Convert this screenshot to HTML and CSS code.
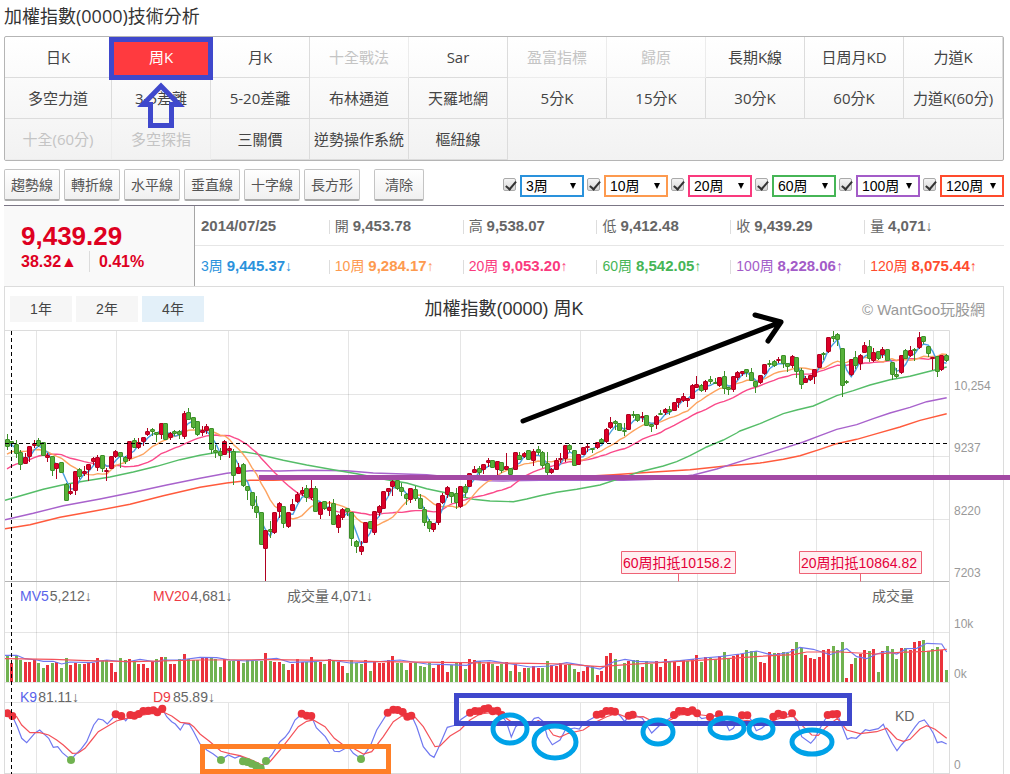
FILE: index.html
```html
<!DOCTYPE html>
<html lang="zh-Hant">
<head>
<meta charset="utf-8">
<title>加權指數(0000)技術分析</title>
<link rel="stylesheet" href="styles.css">
</head>
<body>
<main class="page">
  <h1 class="title">加權指數(0000)技術分析</h1>

  <nav class="tabs">
    <a href="#">日K</a><a href="#" class="active">周K</a><a href="#">月K</a><a href="#" class="off">十全戰法</a><a href="#">Sar</a><a href="#" class="off">盈富指標</a><a href="#" class="off">歸原</a><a href="#">長期K線</a><a href="#">日周月KD</a><a href="#">力道K</a>
    <a href="#">多空力道</a><a href="#">3-5差離</a><a href="#">5-20差離</a><a href="#">布林通道</a><a href="#">天羅地網</a><a href="#">5分K</a><a href="#">15分K</a><a href="#">30分K</a><a href="#">60分K</a><a href="#">力道K(60分)</a>
    <a href="#" class="off">十全(60分)</a><a href="#" class="off">多空探指</a><a href="#">三關價</a><a href="#">逆勢操作系統</a><a href="#">樞紐線</a>
  </nav>

  <div class="tools">
    <div class="draw">
      <button type="button">趨勢線</button><button type="button">轉折線</button><button type="button">水平線</button><button type="button">垂直線</button><button type="button">十字線</button><button type="button">長方形</button><button type="button" class="clear">清除</button>
    </div>
    <div class="averages">
      <span class="avg c3"><input type="checkbox" checked aria-label="顯示3周"><span class="pick"><select aria-label="均線一"><option>3周</option></select></span></span>
      <span class="avg c10"><input type="checkbox" checked aria-label="顯示10周"><span class="pick"><select aria-label="均線二"><option>10周</option></select></span></span>
      <span class="avg c20"><input type="checkbox" checked aria-label="顯示20周"><span class="pick"><select aria-label="均線三"><option>20周</option></select></span></span>
      <span class="avg c60"><input type="checkbox" checked aria-label="顯示60周"><span class="pick"><select aria-label="均線四"><option>60周</option></select></span></span>
      <span class="avg c100"><input type="checkbox" checked aria-label="顯示100周"><span class="pick"><select aria-label="均線五"><option>100周</option></select></span></span>
      <span class="avg c120"><input type="checkbox" checked aria-label="顯示120周"><span class="pick"><select aria-label="均線六"><option>120周</option></select></span></span>
    </div>
  </div>

  <section class="quote">
    <div class="price">
      <strong class="last">9,439.29</strong>
      <div class="change"><span>38.32▲</span><span class="pct">0.41%</span></div>
    </div>
    <div class="stats">
      <div><b>2014/07/25</b></div>
      <div>開 <b>9,453.78</b></div>
      <div>高 <b>9,538.07</b></div>
      <div>低 <b>9,412.48</b></div>
      <div>收 <b>9,439.29</b></div>
      <div>量 <b>4,071</b>↓</div>
      <div class="c3">3周 <b>9,445.37</b>↓</div>
      <div class="c10">10周 <b>9,284.17</b>↑</div>
      <div class="c20">20周 <b>9,053.20</b>↑</div>
      <div class="c60">60周 <b>8,542.05</b>↑</div>
      <div class="c100">100周 <b>8,228.06</b>↑</div>
      <div class="c120">120周 <b>8,075.44</b>↑</div>
    </div>
  </section>

  <section class="chart">
    <header class="charthead">
      <div class="ranges">
        <button type="button">1年</button><button type="button">2年</button><button type="button" class="on">4年</button>
      </div>
      <h2>加權指數(0000) 周K</h2>
      <span class="copy">© WantGoo玩股網</span>
    </header>
    <svg id="plot" class="plot" viewBox="5 329 998 445">
      <g id="grid"></g>
      <g id="averages"></g>
      <g id="candles"></g>
      <g id="volume"></g>
      <g id="oscillator"></g>
      <path class="cross" d="M11.5 331V774M5 443.5H948"/>
      <g class="axis">
        <text x="954" y="390">10,254</text><text x="954" y="452">9237</text><text x="954" y="515">8220</text><text x="954" y="577">7203</text>
        <text x="954" y="628">10k</text><text x="954" y="678">0k</text><text x="954" y="769">0</text>
      </g>
      <g class="legend">
        <text x="20" y="601"><tspan class="blue">MV5</tspan><tspan dx="1">5,212↓</tspan></text>
        <text x="153" y="601"><tspan class="red">MV20</tspan><tspan dx="1">4,681↓</tspan></text>
        <text x="287" y="601">成交量<tspan dx="2">4,071↓</tspan></text>
        <text x="872" y="601">成交量</text>
        <text x="20" y="702"><tspan class="blue">K9</tspan><tspan dx="1">81.11↓</tspan></text>
        <text x="153" y="702"><tspan class="red">D9</tspan><tspan dx="2">85.89↓</tspan></text>
        <text x="895" y="721">KD</text>
      </g>
      <g class="flag">
        <path d="M621.5 551.5h114v22h-114zM678.5 573.5v8M799.5 551.5h122v22h-122zM860.5 573.5v8"/>
        <text x="623" y="568">60周扣抵10158.2</text><text x="801" y="568">20周扣抵10864.82</text>
      </g>
    </svg>
  </section>

  <svg class="notes" viewBox="0 0 1010 774" aria-hidden="true">
    <path stroke="#a349a4" stroke-width="5" d="M259 477.5H1010"/>
    <path stroke="#000" stroke-width="5" stroke-linecap="round" stroke-linejoin="round" d="M523 421L781 322M755 315L781 322L768 341"/>
    <g stroke="#3f48cc" stroke-width="5">
      <path d="M111.5 39.5h99v38h-99zM456.500 695.500h393v28h-393z"/>
      <path d="M161 86L143 104.500H150.500V125.500H171.500V104.500H179Z"/>
    </g>
    <path stroke="#ff7f27" stroke-width="5" d="M202.500 746.500h186v25h-186z"/>
    <g stroke="#00a2e8" stroke-width="5">
      <ellipse cx="510" cy="729" rx="17" ry="14"/><ellipse cx="555" cy="742" rx="21" ry="16"/><ellipse cx="658" cy="732" rx="15" ry="12"/>
      <ellipse cx="727" cy="728" rx="17" ry="10"/><ellipse cx="761" cy="729" rx="12" ry="9"/><ellipse cx="812" cy="742" rx="20" ry="12"/>
    </g>
  </svg>
</main>
<script src="chart.js"></script>
</body>
</html>
```

FILE: styles.css
```css
* { box-sizing: border-box; }
body {
  margin: 0;
  background: #fff;
  color: #444;
  font-family: "Liberation Sans", "Noto Sans CJK TC", sans-serif;
}
.page { position: relative; padding: 4px 6px 0 4px; }

.title {
  margin: 0 0 8px;
  font: 400 18px/24px "Open Sans", "Noto Sans CJK TC", sans-serif;
  color: #333;
}

.tabs {
  display: grid;
  grid-template-columns: 107px repeat(9, 1fr);
  grid-auto-rows: 41px;
  border: 1px solid #b5b5b5;
  border-radius: 2px;
  background: linear-gradient(#fff, #f2f2f2);
  font: 400 15px/40px "Open Sans", "Noto Sans CJK TC", sans-serif;
  text-align: center;
}
.tabs a {
  border-right: 1px solid #dcdcdc;
  border-bottom: 1px solid #dcdcdc;
  color: #444;
  text-decoration: none;
  white-space: nowrap;
}
.tabs .off { color: #c4c4c4; border-color: #ececec; }
.tabs .active { background: #ff3a3f; color: #fff; }

.tools {
  display: flex;
  justify-content: space-between;
  align-items: center;
  padding: 8px 0 4px;
}
.draw { display: flex; gap: 4px; }
.draw button {
  height: 32px;
  padding: 0 6px;
  border: 1px solid #c4c4c4;
  border-bottom: 2px solid #aaa;
  border-radius: 2px;
  background: linear-gradient(#fff, #f0f0f0);
  color: #555;
  font: 400 14px/28px "Liberation Sans", "Noto Sans CJK TC", sans-serif;
}
.draw .clear { margin-left: 10px; padding: 0 10px; }

.averages { display: flex; gap: 3px; }
.avg { display: flex; align-items: center; gap: 4px; }
.avg input {
  position: relative;
  width: 13px;
  height: 13px;
  margin: 0 0 2px;
  appearance: none;
  border: 1px solid #aaa;
  border-radius: 2px;
  background: linear-gradient(#f4f4f4, #d8d8d8);
}
.avg input:checked::after {
  content: "";
  position: absolute;
  left: 4px;
  top: 0;
  width: 4px;
  height: 9px;
  border: solid #333;
  border-width: 0 2px 2px 0;
  transform: rotate(40deg);
}
.pick { position: relative; margin-top: 2px; }
.pick::after {
  content: "";
  position: absolute;
  right: 8px;
  top: 8px;
  border: solid transparent;
  border-width: 6px 3px 0;
  border-top-color: #000;
}
.pick select {
  display: block;
  width: 64px;
  height: 22px;
  padding: 0 4px;
  appearance: none;
  border: 2px solid currentColor;
  border-radius: 0;
  background: #fff;
  font: 400 14px/18px "Liberation Sans", "Noto Sans CJK TC", sans-serif;
  color: inherit;
  -webkit-text-fill-color: #000;
}
.pick select option { color: #000; }

.c3 { color: #2a92dc; }
.c10 { color: #fd9a4f; }
.c20 { color: #fa3a7e; }
.c60 { color: #46b556; }
.c100 { color: #a35cc8; }
.c120 { color: #ff4b2d; }

.quote {
  display: grid;
  grid-template-columns: 191px 1fr;
  border-top: 1px solid #7b7685;
}
.price {
  padding: 16px 17px 14px;
  border-right: 1px solid #a6a6a6;
  background: #f9f9f9;
  color: #de001f;
  font-weight: 700;
}
.last { display: block; font-size: 26px; line-height: 29px; }
.change { display: flex; gap: 12px; font-size: 16px; line-height: 21px; }
.pct { padding-left: 9px; border-left: 1px solid #dcdcdc; }
.stats {
  display: grid;
  grid-template-columns: repeat(6, 1fr);
  padding-right: 6px;
  font-size: 14px;
  line-height: 16px;
  color: #666;
}
.stats div {
  padding: 12px 0 12px 6px;
  height: 40px;
  white-space: nowrap;
  background: linear-gradient(#ddd, #ddd) 0 14px / 1px 14px no-repeat;
}
.stats div:nth-child(6n + 1) { background: none; }
.stats div:nth-child(-n + 6) { border-bottom: 1px solid #e6e6e6; }
.stats div:nth-child(6) { margin-right: -6px; }
.stats b { font-size: 15px; }

.chart { border: 1px solid #dcdcdc; border-bottom: 0; }
.charthead {
  display: grid;
  grid-template-columns: 1fr auto 1fr;
  align-items: center;
  height: 42px;
  padding: 1px 5px 0;
}
.ranges { display: flex; gap: 4px; }
.ranges button {
  width: 62px;
  height: 26px;
  padding: 0;
  border: 0;
  background: #f6f6f6;
  color: #444;
  font: 400 14px/26px "Liberation Sans", "Noto Sans CJK TC", sans-serif;
}
.ranges .on { background: #e3f0f9; }
.charthead h2 { margin: 0; font-size: 18px; line-height: 26px; font-weight: 400; color: #333; }
.copy { justify-self: end; margin-right: 13px; padding-top: 3px; font-size: 15px; line-height: 24px; color: #999; }

.plot { display: block; width: 100%; fill: none; }
.plot text { font-size: 14px; }
.plot .axis text { font-size: 12px; fill: #999; }
.legend text { fill: #666; }
.legend .blue { fill: #5a64ea; }
.legend .red { fill: #ee3a44; }
.flag path { fill: #ffeff1; stroke: #ee6275; }
.flag text { fill: #e4003a; }
.cross { stroke: #000; stroke-dasharray: 4 3; }
.ma { stroke-width: 1.4; }
.grid { stroke: #000; stroke-opacity: .1; }
.frame { stroke: #dcdcdc; }
.base { stroke: #b4b4b4; }
.up { fill: #dc0028; stroke: #b00020; }
.down { fill: #57b13a; stroke: #3c8f28; }
.vol-up, .dot-up { fill: #eb323c; }
.vol-down, .dot-down { fill: #70b250; }
.k { stroke: #7078f0; stroke-width: 1.2; }
.d { stroke: #f4525a; stroke-width: 1.2; }

.notes {
  position: absolute;
  left: 0;
  top: 0;
  width: 100%;
  fill: none;
  pointer-events: none;
}
```

FILE: chart.js
```js
const NS = 'http://www.w3.org/2000/svg';
const byId = id => document.getElementById(id);

function add(parent, name, attrs) {
  const el = document.createElementNS(NS, name);
  for (const key in attrs) el.setAttribute(key, attrs[key]);
  parent.appendChild(el);
}

// Series values use three units per drawing unit; each panel has its own origin.
const UNIT = 3;
const PRICE_TOP = 325;
const LOWER_TOP = 580;
const FIRST_X = 7;
const LAST_X = 946.5;
const r = v => Math.round(v * 10) / 10;

function line(parent, points, top, cls, color) {
  const d = points.map(p => r(p[0] / UNIT) + ',' + r(top + p[1] / UNIT)).join(' ');
  const attrs = { points: d, class: cls };
  if (color) attrs.stroke = color;
  add(parent, 'polyline', attrs);
}

// Turns "offset: x,y x,y | offset: ..." into absolute points.
function parse(text) {
  return text.split('|').flatMap(part => {
    const [head, body] = part.split(':');
    const [dx, dy] = head.trim().split('/').map(Number);
    return body.trim().split(/\s+/).map(pair => {
      const [x, y] = pair.split(',').map(Number);
      return [x + dx, y + (dy || 0)];
    });
  });
}

// Direction, body top, body bottom, high, low.
const candles = `G346,365,328,374 G352,358,350,362 G360,388,345,398 G385,421,376,434 R400,418,384,418 R367,397,367,412
R358,364,346,369 G348,362,339,366 G355,394,355,394 R394,400,384,410 G397,439,397,452 R418,433,415,461 G415,445,415,445
G481,529,475,529 R502,508,478,510 R442,499,442,510 G436,455,430,462 R442,448,423,454 R421,436,417,468 R403,412,396,420
R400,430,391,438 G394,433,394,440 R438,440,430,468 R397,433,397,433 R382,397,376,400 G385,397,385,428 G400,412,392,417
R352,403,352,408 G349,370,340,370 R355,370,340,372 R340,352,337,364 R322,331,310,334 G316,320,310,332 G325,331,322,350
R298,331,298,341 G298,346,294,346 R328,340,322,344 G322,328,316,334 G322,331,315,342 R268,337,259,342 G265,286,250,286
G280,310,276,313 G292,331,290,334 R319,325,303,333 R307,319,298,328 G313,376,310,388 G379,384,360,398 G382,394,370,404
R352,391,346,391 R373,377,363,398 G382,454,373,480 R430,448,415,448 G421,482,415,485 G487,498,487,525 G505,542,500,552
G547,565,513,578 G565,661,565,661 R619,673,614,768 G616,622,588,638 R565,625,565,628 R538,562,531,578 G547,598,547,609
R565,605,562,608 R541,559,522,559 R511,532,502,534 R499,506,487,513 G493,520,481,530 R493,518,462,524 G493,562,484,562
R535,571,530,582 G532,551,528,554 R550,559,528,574 G538,601,523,601 R574,610,566,624 R556,580,550,585 G553,560,550,574
G565,643,565,662 G652,667,646,684 R667,682,648,690 R595,655,595,655 G592,611,592,611 R562,625,558,630 R547,565,540,574
R502,553,502,553 R493,502,488,514 R472,485,464,514 G469,493,466,496 G490,502,475,513 G511,523,505,540 R493,526,488,534
G496,523,484,528 G523,553,507,553 G556,595,546,603 G592,613,582,621 R598,616,594,621 R538,595,538,600 R514,535,503,538
R490,511,484,518 G505,517,505,534 G508,535,489,552 R487,547,484,549 G487,505,477,516 R447,487,447,487 R436,445,423,445
G433,443,424,452 R421,436,416,446 R409,415,399,426 G409,430,406,430 R412,436,412,450 G415,439,410,445 R427,434,384,434
G433,450,433,450 R385,436,385,436 G394,406,382,406 R388,397,382,400 G379,406,376,406 R382,409,372,422 G376,384,363,390
G385,424,378,430 G418,445,382,452 R436,445,430,448 R409,436,399,436 R403,406,384,415 R364,403,364,410 G364,376,357,382
G379,424,379,424 R391,421,391,421 R370,391,366,391 R366,368,358,380 G373,376,370,384 R355,370,352,372 G346,353,340,356
R316,352,310,354 R295,310,276,312 G292,298,286,314 G298,319,294,319 G319,322,295,333 R271,316,268,316 G270,272,258,280
G271,289,266,292 R276,280,262,290 G274,304,272,304 G301,305,298,320 R277,301,270,312 G268,271,256,271 R256,265,250,270
G256,262,243,270 R235,259,230,259 R223,235,222,248 R217,228,205,230 R223,229,220,245 R184,223,176,223 R181,190,153,190
G184,199,178,202 R172,196,165,200 G166,172,153,176 G174,176,160,178 R160,182,156,186 G157,193,138,206 G190,196,186,209
R157,196,157,201 R145,160,138,165 R142,146,137,154 G136,145,132,155 G145,169,130,169 G172,186,172,203 R154,175,149,178
R121,148,120,150 G117,119,105,126 G112,124,105,126 R106,109,97,114 G94,118,93,128 G118,126,114,141 R97,124,90,130
G100,142,97,160 G139,181,129,191 R163,173,153,175 R154,166,151,167 R136,155,132,177 R91,130,88,130 G88,91,81,106
R40,82,37,84 G37,43,18,51 G31,46,25,62 G73,184,73,215 G172,175,165,177 R106,151,105,153 G100,124,78,132 R94,118,87,136
R64,85,51,85 G67,103,46,112 R85,109,70,111 G82,103,77,105 R76,91,66,99 G76,109,73,109 G115,150,110,166 G151,157,129,160
R94,145,90,147 G79,103,73,103 R79,94,63,96 G75,79,70,108 R40,70,21,72 G37,52,34,57 G67,88,65,97 R100,103,95,134
G97,142,96,156 R94,136,92,137 G94,109,87,110`.split(/\s+/).map(s => ({ up: s[0] === 'R', v: s.slice(1).split(',').map(Number) }));

const volume = `G226 R248 G228 G240 R246 R246 R240 G249 G264 R255 G248 R246 G264 G234 R255 R248 G252 R252 R246 R248 R234 G242
G240 R250 R276 G234 G240 R237 G243 R252 R252 R264 R244 G238 R231 G231 R252 R252 G237 R222 G237 G240 G240 R234 R234 G234
G237 G261 R237 G243 G243 R243 G249 G240 G243 G243 G243 R219 G243 R246 R246 G252 R270 R252 R237 R246 G246 R231 G243 R246
G252 R237 G243 R246 R258 G279 G240 G248 G252 R240 G273 R243 R249 R249 R240 R228 G249 G249 G270 R249 G249 G258 G261 G250
R264 R255 R243 R276 G255 G249 R249 G267 R237 R240 G243 R252 R246 G252 R258 G252 R246 G273 R252 G276 R264 G264 R258 R264
G264 G243 R255 R258 R249 R255 G252 G267 R276 R273 R260 G257 R285 R273 R228 R219 G237 G267 G249 R243 G240 G240 R261 G243
G252 R243 R261 R237 G246 R246 R258 R240 G243 R237 R225 G246 R231 G234 G238 R228 G216 G237 R228 R222 R222 G210 G213 G214
R246 R249 R216 G219 R219 G216 G219 R207 G186 G204 R225 R234 R237 R231 R210 R207 G198 G210 G186 R294 R252 G234 R222 R210
G213 R207 G276 R213 G198 G207 G237 R204 G204 R210 R186 R183 G180 G213 G207 G201 R210 G270`.split(/\s+/);

const grid = byId('grid');
const columns = [36.5, 116.5, 228.5, 348.5, 460.5, 580.5, 697.5, 816.5, 933.5];
add(grid, 'path', {
  class: 'grid',
  d: columns.map(x => `M${x} 331V682M${x} 703V774`).join('') + 'M5 394.5H949M5 456.5H949M5 519.5H949M5 632.5H949M5 682.5H949M5 702.5H949'
});
add(grid, 'path', { class: 'frame', d: 'M5 330.5H949.5V774M5 773.5H949' });
add(grid, 'path', { class: 'base', d: 'M5 581.5H949' });

const averages = byId('averages');
const step = (LAST_X - FIRST_X) / (candles.length - 1);
const earlier = Array.from({ length: 20 }, (_, i) => 525 - i * 9);
const closes = earlier.concat(candles.map(c => c.up ? c.v[0] : c.v[1]));
function movingAverage(n) {
  return candles.map((c, i) => {
    const end = i + earlier.length + 1;
    const sum = closes.slice(end - n, end).reduce((a, b) => a + b, 0);
    return [(FIRST_X + i * step) * UNIT, sum / n];
  });
}
line(averages, parse(`0/0: 15,611 90,599 180,577 280,559 390,538 490,512 600,487 680,474 750,466 820,466 920,463 1100,458
| 1470/0: 250,456 370,449 480,442 600,434 700,424 780,417
| 2220/-45: 60,459 130,448 180,437 240,418 290,401 350,388 410,371 480,351 540,331 620,311`), PRICE_TOP, 'ma', '#ff5a3c');
line(averages, parse(`0/0: 15,584 100,565 190,542 300,522 400,502 500,480 600,460 680,445 750,437
| 720/0: 120,438 200,436 320,437 400,444 560,449 690,462 | 1470/0: 0,467 40,468 150,466 400,466 520,462 610,450 680,432 780,400
| 2220/-45: 70,434 130,415 190,396 240,377 290,358 350,344 400,326 450,309 510,292 560,275 620,263`), PRICE_TOP, 'ma', '#a862cc');
line(averages, parse(`0/0: 15,526 70,510 130,493 190,479 250,469 330,456 400,441 470,424 540,404 600,391 640,384 690,380 735,381
| 720/0: 50,387 130,406 200,420 280,434 350,446 440,464 500,474 560,491 620,504 660,514 700,523
| 1470/0: 0,528 70,530 110,522 150,512 200,502 260,493 330,480 400,457 450,440 520,423 560,410 600,392 650,366 700,345 740,324
| 2220/-45: 0,363 60,341 130,311 170,300 220,288 290,257 340,242 390,225 450,209 510,199 560,186 620,171`), PRICE_TOP, 'ma', '#55bd68');
line(averages, movingAverage(20), PRICE_TOP, 'ma', '#fa4a8a');
line(averages, movingAverage(10), PRICE_TOP, 'ma', '#fda35f');
line(averages, movingAverage(3), PRICE_TOP, 'ma', '#4a9fe0');

const candleLayer = byId('candles');
candles.forEach((c, i) => {
  const x = Math.floor(FIRST_X + i * step) + 0.5;
  const [top, bottom, high, low] = c.v.map(v => Math.round(PRICE_TOP + v / UNIT));
  const cls = c.up ? 'up' : 'down';
  add(candleLayer, 'path', { class: cls, d: `M${x} ${high}V${low}` });
  add(candleLayer, 'rect', { class: cls, x: x - 2, y: top - 0.5, width: 4, height: Math.max(1, bottom - top), rx: 0.5 });
});

const volumeLayer = byId('volume');
const volumeStep = (LAST_X - FIRST_X) / (volume.length - 1);
volume.forEach((s, i) => {
  const y = Math.round(LOWER_TOP + Number(s.slice(1)) / UNIT);
  add(volumeLayer, 'rect', {
    class: s[0] === 'R' ? 'vol-up' : 'vol-down',
    x: Math.floor(FIRST_X + i * volumeStep) - 1, y, width: 3, height: 682 - y
  });
});
line(volumeLayer, parse(`0: 15,226 50,226 75,236 110,240 130,244 160,244 185,252 210,246 270,248 320,240 380,246 420,238 470,246 490,240 540,240 600,232 650,233 690,240 740,243 830,235 870,247 940,245
| 990: 0,240 60,249 130,246 210,240 290,252 350,254 410,256 440,244 480,242 530,250 600,261 660,258 710,248 760,256 810,267 850,246 885,238 920,244
| 1980: 0,247 60,242 130,234 180,230 240,222 290,213 340,226 390,216 420,202 460,208 510,224 560,206 590,230 620,236 650,222 680,214 710,222 740,206 770,205 800,190 845,192 860,216`), LOWER_TOP, 'k');
line(volumeLayer, parse(`0: 15,236 160,238 260,242 400,245 600,240 800,239
| 990: 0,241 150,245 400,248 600,250 700,252 810,260 900,253 1020,246
| 1980: 100,242 200,236 300,229 400,224 440,216 540,216 650,222 720,217 800,214 860,208`), LOWER_TOP, 'd');

const osc = byId('oscillator');
line(osc, parse(`0: 15,398 37,408 52,440 65,475 80,488 106,458 119,450 146,475 160,502 173,500 187,518 213,540 225,525 241,510 260,485 281,435 295,417 309,420 322,432 349,403 365,408 377,422 391,405 405,407 430,393 460,390 487,386 500,410 515,425 526,432 541,450 553,430 568,433 581,455 600,492 620,510 640,522 663,540 685,525 705,534 720,528 750,545 785,565 799,543 815,525 840,485 855,472 868,455 885,420 905,402 934,408 949,443 976,470 1003,514
| 990: 28,515 55,500 70,520 93,536 120,500 140,450 173,398 190,388 218,398 232,412 245,407 260,440 280,500 300,525 312,532 325,505 352,442 375,436 394,418 420,400 436,393 475,385 502,392 517,410 529,425 544,471 557,440 571,430 598,433 613,415 625,412 640,425 652,470 667,494 690,480 706,450 733,444 748,447 760,430 790,413 830,393 857,396 871,408 884,425 898,406 910,404 937,415 965,459 990,435
| 1980: 25,418 43,406 70,395 98,390 125,416 150,411 178,402 193,420 208,452 220,445 240,406 262,406 274,420 289,452 305,445 328,425 343,408 370,405 396,400 412,430 425,470 452,490 465,475 480,445 503,405 532,402 547,440 562,478 574,473 589,475 616,449 628,452 655,446 670,433 682,460 697,490 711,512 724,495 736,482 750,462 766,440 778,425 793,420 805,435 820,460 832,488 845,485 860,492`), LOWER_TOP, 'k');
line(osc, parse(`0: 15,400 50,410 65,435 90,458 119,458 146,465 170,480 190,495 217,520 235,519 255,505 275,480 295,455 320,440 349,423 391,412 430,405 490,396 515,408 541,427 568,430 581,440 600,462 630,485 663,514 690,521 720,527 750,538 785,554 810,545 840,510 868,475 895,440 920,424 940,420 975,440 1003,475
| 990: 40,495 70,505 100,522 125,515 160,470 190,425 215,408 255,411 280,440 315,500 330,498 360,468 390,450 420,420 450,402 490,397 525,412 550,430 600,435 625,422 645,432 670,465 690,471 715,460 760,450 790,430 830,410 860,400 890,412 940,410 970,425
| 1980: 0,435 20,425 60,405 100,402 150,408 200,410 240,420 280,423 320,428 360,415 400,408 430,440 455,465 475,466 500,440 532,415 560,450 600,461 650,455 680,445 710,477 730,484 750,478 780,447 800,437 825,448 860,475`), LOWER_TOP, 'd');

const dots = (text, cls) => parse(text).forEach(([x, y]) =>
  add(osc, 'circle', { class: cls, cx: r(x / UNIT), cy: r(LOWER_TOP + y / UNIT), r: 4 }));
dots(`0: 22,400 37,408 347,403 364,408 391,405 403,407 416,402 430,393 445,392 460,391 472,397 487,386 905,401 920,407 934,408
| 990: 173,398 190,389 203,390 218,396 232,410 244,407 420,398 435,393 448,394 463,387 475,385 488,394 502,392 515,405 800,404 815,402 829,393 843,393 855,395 896,407 908,404
| 1980: 42,405 57,393 70,393 83,396 97,391 111,400 150,411 177,403 246,406 262,406 340,410 355,401 370,405 396,400 503,405 518,403 531,402`, 'dot-up');
dots('0: 213,540 663,540 729,544 742,546 755,551 768,557 782,565 798,543 | 990: 93,537', 'dot-down');
```
